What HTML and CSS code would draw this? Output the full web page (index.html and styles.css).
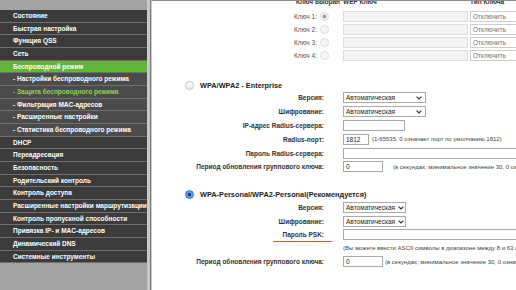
FILE: index.html
```html
<!DOCTYPE html>
<html lang="ru">
<head>
    <meta charset="UTF-8">
    <meta name="viewport" content="width=device-width, initial-scale=1.0">
    <title>Защита беспроводного режима</title>
    <link rel="stylesheet" href="styles.css">
</head>
<body>
<div class="page">

    <!-- Меню слева -->
    <ul class="menu">
        <li>Состояние</li>
        <li>Быстрая настройка</li>
        <li>Функция QSS</li>
        <li>Сеть</li>
        <li class="active">Беспроводной режим</li>
        <li class="sub">- Настройки беспроводного режима</li>
        <li class="sub current">- Защита беспроводного режима</li>
        <li class="sub">- Фильтрация MAC-адресов</li>
        <li class="sub">- Расширенные настройки</li>
        <li class="sub">- Статистика беспроводного режима</li>
        <li>DHCP</li>
        <li>Переадресация</li>
        <li>Безопасность</li>
        <li>Родительский контроль</li>
        <li>Контроль доступа</li>
        <li>Расширенные настройки маршрутизации</li>
        <li>Контроль пропускной способности</li>
        <li>Привязка IP- и MAC-адресов</li>
        <li>Динамический DNS</li>
        <li>Системные инструменты</li>
    </ul>
    <div class="divider"></div>

    <div class="content">

        <!-- WEP ключи -->
        <div class="keys">
            <div class="keys-head">
                <span class="kh-sel">Ключ выбран</span>
                <span>WEP Ключ</span>
                <span class="kh-type">Тип Ключа</span>
            </div>
            <div class="key-row">
                <label>Ключ 1:</label>
                <span class="radio dis checked"></span>
                <input type="text" class="key-input" disabled>
                <select class="key-type" disabled><option>Отключить</option></select>
            </div>
            <div class="key-row">
                <label>Ключ 2:</label>
                <span class="radio dis"></span>
                <input type="text" class="key-input" disabled>
                <select class="key-type" disabled><option>Отключить</option></select>
            </div>
            <div class="key-row">
                <label>Ключ 3:</label>
                <span class="radio dis"></span>
                <input type="text" class="key-input" disabled>
                <select class="key-type" disabled><option>Отключить</option></select>
            </div>
            <div class="key-row">
                <label>Ключ 4:</label>
                <span class="radio dis"></span>
                <input type="text" class="key-input" disabled>
                <select class="key-type" disabled><option>Отключить</option></select>
            </div>
        </div>

        <!-- WPA/WPA2 - Enterprise -->
        <div class="section enterprise">
            <div class="sec-title"><span class="radio"></span>WPA/WPA2 - Enterprise</div>
            <div class="row">
                <label>Версия:</label>
                <div class="sel sel-wide">
                    <select><option>Автоматическая</option></select>
                    <svg class="chev" width="6" height="4" viewBox="0 0 6 4"><path d="M0.6 0.6 L3 3 L5.4 0.6" fill="none" stroke="#333" stroke-width="1.2"/></svg>
                </div>
            </div>
            <div class="row">
                <label>Шифрование:</label>
                <div class="sel sel-wide">
                    <select><option>Автоматическая</option></select>
                    <svg class="chev" width="6" height="4" viewBox="0 0 6 4"><path d="M0.6 0.6 L3 3 L5.4 0.6" fill="none" stroke="#333" stroke-width="1.2"/></svg>
                </div>
            </div>
            <div class="row">
                <label>IP-адрес Radius-сервера:</label>
                <div><input type="text" class="in-ip"></div>
            </div>
            <div class="row">
                <label>Radius-порт:</label>
                <div><input type="text" class="in-port" value="1812"><span class="hint hint-port">(1-65535, 0 означает порт по умолчанию 1812)</span></div>
            </div>
            <div class="row">
                <label>Пароль Radius-сервера:</label>
                <div><input type="text" class="in-long"></div>
            </div>
            <div class="row">
                <label>Период обновления группового ключа:</label>
                <div><input type="text" class="in-period" value="0"><span class="hint hint-period">(в секундах, минимальное значение 30, 0 означает отключение)</span></div>
            </div>
        </div>

        <!-- WPA-Personal -->
        <div class="section personal">
            <div class="sec-title"><span class="radio on"></span>WPA-Personal/WPA2-Personal(Рекомендуется)</div>
            <div class="row">
                <label>Версия:</label>
                <div class="sel sel-short">
                    <select><option>Автоматическая</option></select>
                    <svg class="chev" width="6" height="4" viewBox="0 0 6 4"><path d="M0.6 0.6 L3 3 L5.4 0.6" fill="none" stroke="#333" stroke-width="1.2"/></svg>
                </div>
            </div>
            <div class="row">
                <label>Шифрование:</label>
                <div class="sel sel-short">
                    <select><option>Автоматическая</option></select>
                    <svg class="chev" width="6" height="4" viewBox="0 0 6 4"><path d="M0.6 0.6 L3 3 L5.4 0.6" fill="none" stroke="#333" stroke-width="1.2"/></svg>
                </div>
            </div>
            <div class="row">
                <label><span class="marked">Пароль PSK:</span></label>
                <div><input type="text" class="in-long"></div>
            </div>
            <div class="row">
                <label></label>
                <div><span class="hint">(Вы можете ввести ASCII символы в диапазоне между 8 и 63 или шестнадцатеричные символы в диапазоне между 8 и 64.)</span></div>
            </div>
            <div class="row">
                <label>Период обновления группового ключа:</label>
                <div><input type="text" class="in-period" value="0"><span class="hint hint-period2">(в секундах, минимальное значение 30, 0 означает отключение)</span></div>
            </div>
        </div>

    </div>
</div>
</body>
</html>
```

FILE: styles.css
```css
* {
    box-sizing: border-box;
}

body {
    margin: 0;
    width: 516px;
    height: 290px;
    overflow: hidden;
    background: #fff;
    font-family: "Liberation Sans", Arial, sans-serif;
    color: #222;
}

.page {
    display: flex;
    height: 290px;
}

/* меню */
.menu {
    list-style: none;
    margin: 0;
    padding: 10px 0 0;
    width: 147px;
    flex-shrink: 0;
    background: #a3a3a3;
}

.menu li {
    height: 12.68px;
    line-height: 11.68px;
    border-bottom: 1px solid #6f6f6f;
    background: #3b3b3b;
    color: #fff;
    font-size: 6.5px;
    font-weight: bold;
    padding-left: 13px;
    white-space: nowrap;
    overflow: hidden;
}

.menu li.sub {
    background: #4b4b4b;
}

.menu li.active {
    background: #63b63b;
}

.menu li.current {
    color: #8fd14f;
}

.divider {
    width: 4px;
    flex-shrink: 0;
    background: #c8c8c8;
    border-right: 1px solid #7a7a7a;
}

.content {
    flex: 1;
    overflow: hidden;
    border-left: 1px solid #c9c9c9;
    border-top: 1px solid #8c8c8c;
    padding-left: 1px;
}

/* общие элементы */
label {
    text-align: right;
    font-size: 6.5px;
    font-weight: bold;
    color: #333;
    white-space: nowrap;
}

input, select {
    font-family: inherit;
    font-size: 6.5px;
    color: #222;
    height: 11px;
    margin: 0;
    border: 1px solid #a9a9a9;
    border-radius: 0;
    background: #fff;
    padding: 0 2px;
    vertical-align: middle;
}

select {
    appearance: none;
    -webkit-appearance: none;
}

.radio {
    display: inline-block;
    width: 9px;
    height: 9px;
    border-radius: 50%;
    border: 1px solid #c2c2c2;
    background: linear-gradient(#ffffff, #ececec);
    vertical-align: middle;
}

.radio.dis {
    border-color: #dcdcdc;
    background: #f7f7f7;
}

.radio.dis.checked {
    background: radial-gradient(circle, #9a9a9a 0 1.6px, #f2f2f2 2.2px);
}

.radio.on {
    border-color: #3d7fd6;
    background: radial-gradient(circle, #1f3f86 0 1.5px, #66a8f6 2.1px, #2f78de 100%);
}

.hint {
    font-size: 6px;
    color: #444;
    white-space: nowrap;
    vertical-align: middle;
}

/* ключи */
.keys-head {
    display: grid;
    grid-template-columns: 190px 127px auto;
    margin-top: -3px;
    height: 7px;
    line-height: 7px;
    margin-bottom: 5px;
    font-size: 6.5px;
    font-weight: bold;
    color: #333;
    white-space: nowrap;
}

.kh-sel {
    text-align: right;
    padding-right: 3px;
}

.key-row {
    display: grid;
    grid-template-columns: 165px 25px 125px auto;
    align-items: center;
    height: 13px;
}

.key-row label {
    font-weight: normal;
    color: #555;
    padding-right: 1px;
}

.key-row .radio {
    margin-left: 2px;
}

.key-input {
    width: 125px;
    background: #f4f4f4;
    border-color: #dedede;
}

.key-type {
    width: 60px;
    margin-left: 2px;
    border-color: #bbb;
    color: #333;
}

/* секции */
.section.enterprise {
    margin-top: 17px;
}

.section.personal {
    margin-top: 15px;
}

.sec-title {
    display: flex;
    align-items: center;
    height: 12px;
    padding-left: 32px;
    font-size: 7.35px;
    font-weight: bold;
    color: #222;
    white-space: nowrap;
}

.sec-title .radio {
    margin-right: 6px;
}

.row {
    display: grid;
    grid-template-columns: 171px 1fr;
    column-gap: 19px;
    align-items: center;
    height: 13.8px;
}

.personal .row {
    height: 13.6px;
}

.row > div {
    display: flex;
    align-items: center;
    white-space: nowrap;
}

.sel {
    position: relative;
}

.sel select {
    width: 100%;
}

.sel-wide {
    width: 83px;
}

.sel-short {
    width: 63px;
}

.chev {
    position: absolute;
    right: 4px;
    top: 4px;
}

.sel-short .chev {
    right: 2px;
}

.in-ip {
    width: 62px;
}

.in-port {
    width: 26px;
}

.in-long {
    width: 220px;
}

.in-period {
    width: 40px;
}

.hint-port {
    margin-left: 3px;
}

.hint-period {
    margin-left: 10px;
}

.hint-period2 {
    margin-left: 2px;
}

.marked {
    position: relative;
}

.marked::after {
    content: "";
    position: absolute;
    left: -9px;
    right: -8px;
    bottom: -4px;
    height: 1px;
    background: #e4502b;
}
```
